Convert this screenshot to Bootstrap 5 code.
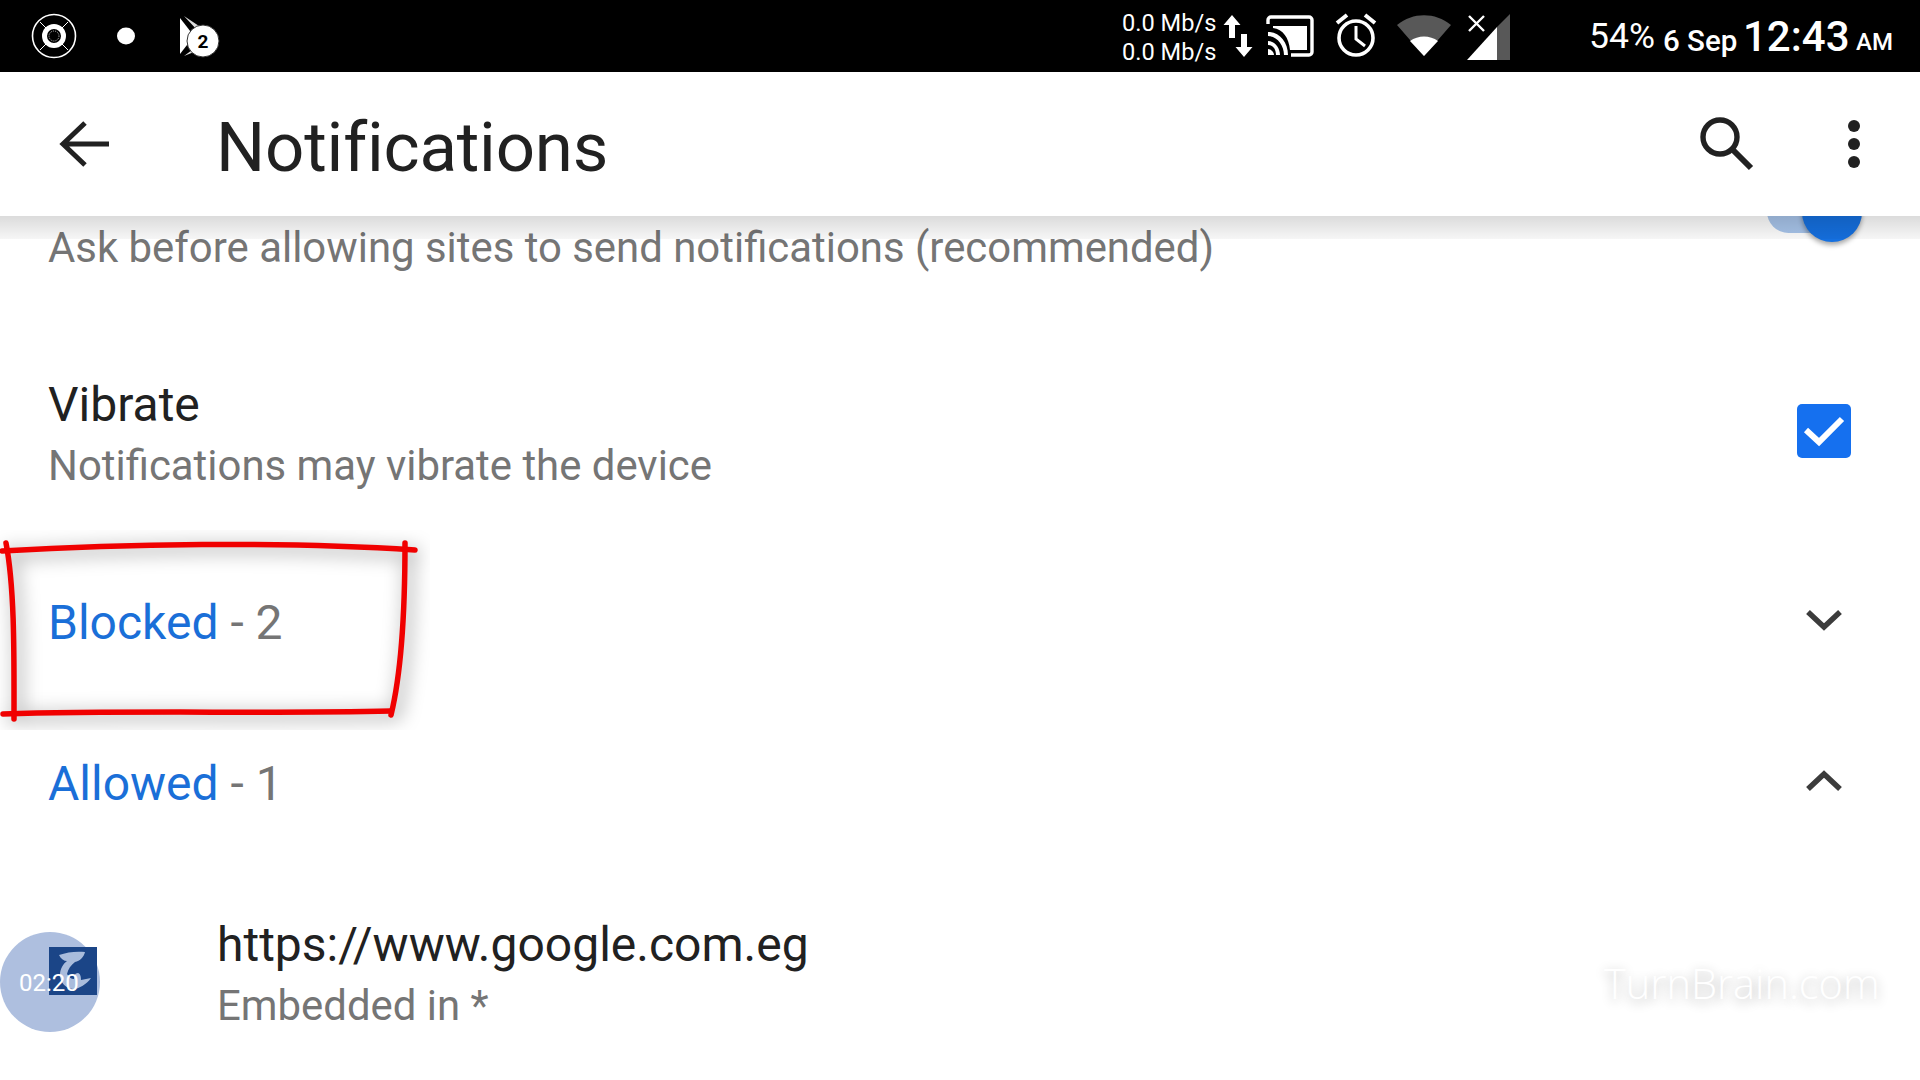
<!DOCTYPE html>
<html lang="en">
<head>
<meta charset="UTF-8">
<title>Notifications</title>
<link href="https://cdn.jsdelivr.net/npm/bootstrap@5.3.2/dist/css/bootstrap.min.css" rel="stylesheet">
<style>
  html, body { margin: 0; background: #fff; }
  body { font-family: Roboto, "Liberation Sans", sans-serif; color: #212121; }
  .screen { width: 1920px; height: 1080px; overflow: hidden; position: relative; background: #fff; }
  /* status bar */
  .status-bar { height: 72px; background: #000; color: #fff; position: relative; z-index: 3; }
  .status-speed { font-size: 23.6px; line-height: 29px; margin-left: 1122px; margin-top: 3px; width: 101px; white-space: nowrap; }
  .status-battery { font-size: 35.5px; line-height: 1; margin-left: 78px; width: 74px; margin-top: 1px; }
  .status-date { font-size: 29.5px; font-weight: 500; line-height: 1; margin-top: 11px; width: 80px; white-space: nowrap; }
  .status-time { font-size: 42px; font-weight: 500; line-height: 1; width: 113px; margin-top: 1px; }
  .status-ampm { font-size: 24px; font-weight: 500; line-height: 1; margin-top: 12px; }
  /* toolbar */
  .app-bar { height: 144px; background: #fff; position: relative; z-index: 2; }
  .app-bar::after { content: ""; position: absolute; left: 0; right: 0; top: 144px; height: 23px; background: linear-gradient(rgba(0,0,0,.14), rgba(0,0,0,.035)); }
  .app-title { font-size: 69px; line-height: 1; margin: 6px 0 0 106px; font-weight: 400; color: #212121; letter-spacing: -.2px; }
  /* list */
  .row-ask { height: 141px; padding: 1px 48px 0; }
  .row-vibrate { height: 236px; padding: 18px 69px 0 48px; }
  .row-section { height: 161px; padding: 0 78px 0 48px; }
  .row-site { padding: 0 0 0 217px; }
  .item-title { font-size: 48px; line-height: 60px; color: #212121; }
  .item-sub { font-size: 41.9px; line-height: 62px; color: #757575; white-space: nowrap; }
  .section-name { color: #1a6fd8; }
  .section-count { color: #757575; }
  .check-box { width: 54px; height: 54px; background: #1570ef; border-radius: 5px; margin-top: 29px; }
  .chevron-icon { margin-top: 16px; }
  .toggle-track { position: absolute; left: 1767px; top: 190px; width: 84px; height: 43px; border-radius: 22px; background: #a9c6ec; z-index: 1; }
  .toggle-thumb { position: absolute; left: 1802px; top: 182px; width: 60px; height: 60px; border-radius: 50%; background: #1570e0; box-shadow: 0 3px 5px rgba(0,0,0,.35); z-index: 1; }
  /* overlays */
  .red-mark { position: absolute; left: 0; top: 530px; z-index: 4; }
  .timer-bubble { position: absolute; left: 0; top: 932px; width: 100px; height: 100px; border-radius: 50%; background: #aebfdf; z-index: 4; }
  .timer-logo { position: absolute; left: 49px; top: 15px; }
  .timer-text { position: absolute; left: 19px; top: 36px; font-size: 24px; line-height: 30px; color: #fff; }
  .watermark { position: absolute; left: 1604px; top: 963px; font-family: "Open Sans", sans-serif; font-weight: 300; font-size: 41.5px; line-height: 1; color: #fff; text-shadow: 0 3px 12px rgba(0,0,0,.32); z-index: 4; }
</style>
</head>
<body>
<div class="screen">

  <!-- status bar -->
  <div class="status-bar d-flex align-items-center position-relative">
    <svg class="position-absolute top-0 start-0" width="240" height="72" viewBox="0 0 240 72">
      <circle cx="54" cy="36" r="21.5" fill="none" stroke="#fff" stroke-width="1.6"/>
      <circle cx="54" cy="36" r="9.5" fill="none" stroke="#fff" stroke-width="5"/>
      <circle cx="54" cy="36" r="5" fill="none" stroke="#fff" stroke-width=".7" stroke-dasharray="1 1"/>
      <path d="M40 22l6 6M68 22l-6 6M40 50l6-6M68 50l-6-6" stroke="#fff" stroke-width="1"/>
      <ellipse cx="126" cy="36" rx="9" ry="8.5" fill="#fff"/>
      <path d="M180 18v36l14-18z" fill="#fff"/>
      <path d="M184 16l18 12-4 3zM184 56l12-9 3 3z" fill="#ddd"/>
      <circle cx="203" cy="41" r="16" fill="#fff" stroke="#333" stroke-width="1"/>
      <text x="203" y="48" text-anchor="middle" font-family="Roboto, sans-serif" font-size="19" font-weight="700" fill="#000">2</text>
    </svg>
    <div class="status-speed"><div>0.0 Mb/s</div><div>0.0 Mb/s</div></div>
    <svg width="34" height="56" viewBox="0 0 34 56" class="flex-shrink-0">
      <path d="M9 7l8.500 10h-5.500v13h-6V17H.5zM21 49l-8.500-10h5.500V26h6v13h5.500z" fill="#fff"/>
    </svg>
    <svg width="50" height="44" viewBox="0 0 50 44" class="flex-shrink-0" style="margin-left:8px">
      <path d="M3 10V6a3 3 0 0 1 3-3h38a3 3 0 0 1 3 3v32a3 3 0 0 1-3 3H26" fill="none" stroke="#fff" stroke-width="3.4"/>
      <path d="M8 12h34v24H25C24 24 18 15 8 14z" fill="#fff"/>
      <path d="M3 18c11 0 20 10 20 23h-4c0-10-7-19-16-19zM3 27c7 0 12 7 12 14h-4c0-6-3-10-8-10zM3 35c3 0 6 3 6 6H3z" fill="#fff"/>
    </svg>
    <svg width="44" height="48" viewBox="0 0 44 48" class="flex-shrink-0" style="margin-left:19px">
      <circle cx="22" cy="26" r="17" fill="none" stroke="#fff" stroke-width="3.6"/>
      <path d="M22 14v13l9 7" fill="none" stroke="#fff" stroke-width="3"/>
      <path d="M3 11L13 3M41 11L31 3" stroke="#fff" stroke-width="4"/>
    </svg>
    <svg width="54" height="44" viewBox="0 0 54 44" class="flex-shrink-0" style="margin-left:19px">
      <path d="M0 11C16-2 38-2 54 11L27 42z" fill="#585858"/>
      <path d="M13 27c8-6 20-6 28 0L27 42z" fill="#fff"/>
    </svg>
    <svg width="44" height="48" viewBox="0 0 44 48" class="flex-shrink-0" style="margin-left:16px">
      <path d="M43 2v46H30V15z" fill="#585858"/>
      <path d="M30 15v33H0z" fill="#fff"/>
      <path d="M2 4l15 15M17 4L2 19" stroke="#fff" stroke-width="2.4"/>
    </svg>
    <div class="status-battery">54%</div>
    <div class="status-date">6 Sep</div>
    <div class="status-time">12:43</div>
    <div class="status-ampm">AM</div>
  </div>

  <!-- toolbar -->
  <div class="app-bar d-flex align-items-center">
    <svg width="52" height="48" viewBox="0 0 52 48" class="flex-shrink-0" style="margin-left:58px">
      <path d="M27 3L5 24l22 21M5 24h46" fill="none" stroke="#212121" stroke-width="5"/>
    </svg>
    <h1 class="app-title">Notifications</h1>
    <svg width="54" height="54" viewBox="0 0 54 54" class="flex-shrink-0" style="margin-left:1092px">
      <circle cx="20" cy="20" r="17" fill="none" stroke="#212121" stroke-width="5.4"/>
      <path d="M32 32l19 19" stroke="#212121" stroke-width="6"/>
    </svg>
    <svg width="14" height="48" viewBox="0 0 14 48" class="flex-shrink-0" style="margin-left:93px">
      <circle cx="7" cy="6" r="6" fill="#212121"/><circle cx="7" cy="24" r="6" fill="#212121"/><circle cx="7" cy="42" r="6" fill="#212121"/>
    </svg>
  </div>

  <div class="toggle-track"></div>
  <div class="toggle-thumb"></div>

  <!-- settings list -->
  <div class="row-ask"><div class="item-sub">Ask before allowing sites to send notifications (recommended)</div></div>

  <div class="row-vibrate d-flex justify-content-between align-items-start">
    <div>
      <div class="item-title">Vibrate</div>
      <div class="item-sub">Notifications may vibrate the device</div>
    </div>
    <div class="check-box d-flex align-items-center justify-content-center">
      <svg width="42" height="32" viewBox="0 0 42 32"><path d="M3 15l13 12L39 4" fill="none" stroke="#fff" stroke-width="6"/></svg>
    </div>
  </div>

  <div class="row-section d-flex justify-content-between align-items-start">
    <div class="item-title"><span class="section-name">Blocked</span><span class="section-count"> - 2</span></div>
    <svg width="36" height="22" viewBox="0 0 36 22" class="chevron-icon"><path d="M2 3l16 15L34 3" fill="none" stroke="#3c3c3c" stroke-width="5.500"/></svg>
  </div>

  <div class="row-section d-flex justify-content-between align-items-start">
    <div class="item-title"><span class="section-name">Allowed</span><span class="section-count"> - 1</span></div>
    <svg width="36" height="22" viewBox="0 0 36 22" class="chevron-icon"><path d="M2 19L18 4l16 15" fill="none" stroke="#3c3c3c" stroke-width="5.500"/></svg>
  </div>

  <div class="row-site">
    <div class="item-title">https://www.google.com.eg</div>
    <div class="item-sub">Embedded in *</div>
  </div>

  <!-- red marker drawn over the video -->
  <svg class="red-mark" width="430" height="200" viewBox="0 0 430 200">
    <defs><filter id="markShadow" x="-10%" y="-20%" width="120%" height="140%"><feGaussianBlur stdDeviation="9"/></filter></defs>
    <g fill="none" stroke="#000" stroke-opacity=".26" stroke-width="11" filter="url(#markShadow)" transform="translate(4 4)">
      <path d="M2 21C120 14 280 11 415 20M6 13C15 60 14 130 14 189M405 13C405 80 402 140 391 185M3 184C130 180 270 184 391 181"/>
    </g>
    <g fill="none" stroke="#f00000" stroke-width="5.500" stroke-linecap="round">
      <path d="M2 21C120 14 280 11 415 20"/>
      <path d="M6 13C15 60 14 130 14 189"/>
      <path d="M405 13C405 80 402 140 391 185"/>
      <path d="M3 184C130 180 270 184 391 181"/>
    </g>
  </svg>

  <!-- floating timer -->
  <div class="timer-bubble">
    <svg class="timer-logo" width="48" height="48" viewBox="0 0 48 48">
      <rect width="48" height="48" fill="#1b4587"/>
      <path d="M10 8c8-3 18-4 26-3-1 5-5 9-10 10-4 3-7 7-8 12 2 3 4 5 7 5 0-3 1-6 4-6 3 1 3 5 3 7l10-2c-4 6-12 11-18 11-8-1-13-7-13-14 0-6 3-11 7-14-3 0-6-2-8-6z" fill="#a9bcdc"/>
    </svg>
    <div class="timer-text">02:20</div>
  </div>

  <div class="watermark">TurnBrain.com</div>
</div>
<script src="https://cdn.jsdelivr.net/npm/bootstrap@5.3.2/dist/js/bootstrap.bundle.min.js"></script>
</body>
</html>
